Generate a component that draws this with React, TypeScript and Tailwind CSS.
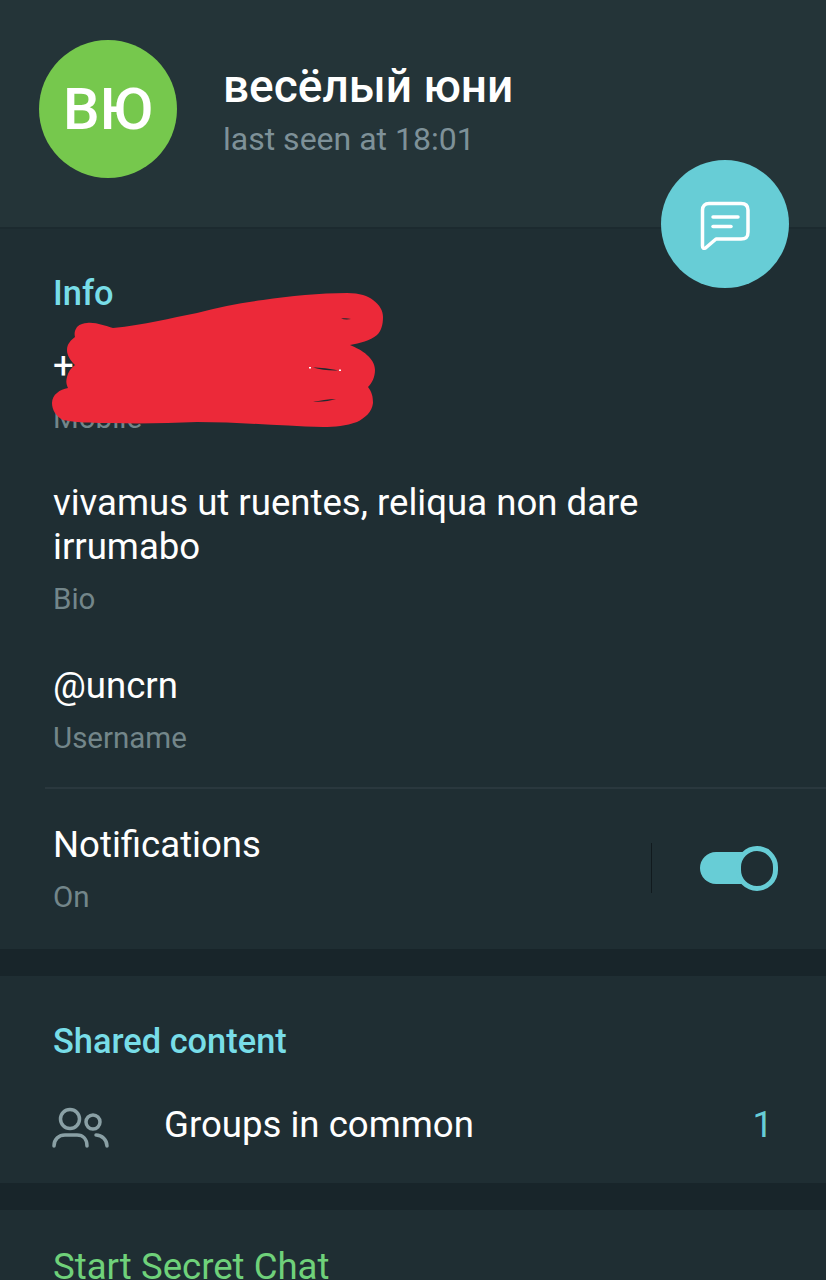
function Field({ value, label }: { value: string; label: string }) {
  return (
    <div>
      <div className="text-[36.6px] leading-[44px] text-white">{value}</div>
      <div className="mt-[12px] text-[29.5px] leading-[36px] text-[#73868a]">{label}</div>
    </div>
  );
}

function Scribble() {
  return (
    <svg className="absolute left-0 top-0" width="826" height="460" viewBox="0 0 826 460">
      <path
        fill="#ec2939"
        d="M87 323 C96 322 105 326 113 328 C145 325 170 318 197 313 C220 307 240 303 263 300 C290 296 320 293 347 293 C360 293 368 296 373 300 C380 305 383 311 383 317 C383 325 381 331 377 335 C370 341 360 343 350 345 C362 350 375 358 375 370 C375 377 372 383 368 387 C372 392 373 397 373 403 C372 412 365 418 357 422 C346 426 335 427 323 427 C280 426 240 422 197 422 C170 423 140 424 113 423 C95 423 78 423 63 420 C56 416 52 410 52 403 C52 399 54 395 57 393 C60 390 64 389 68 388 C66 384 66 381 67 377 C68 372 71 368 75 365 C70 360 67 355 67 350 C67 344 71 340 75 337 C74 333 75 330 77 327 C80 324 84 323 87 323 Z"
      />
      <path fill="#1f2b30" d="M341 318.5 C344 318 348 318 351 319 C348 319.6 344 319.6 341 318.5 Z" />
      <path fill="#1f2b30" d="M313 367.5 C320 367.5 330 368.5 338 370.5 C330 371 320 369.5 313 367.5 Z" />
      <path fill="#1f2b30" d="M313 401.5 C320 401 328 399 336 399 C330 401 320 402.5 313 401.5 Z" />
      <rect x="309" y="367" width="2" height="1.5" fill="#ffffff" />
      <rect x="339" y="369.5" width="2" height="1.5" fill="#ffffff" />
    </svg>
  );
}

export default function App() {
  return (
    <div className="relative h-[1280px] w-[826px] overflow-hidden bg-[#1f2e33] font-['Roboto',sans-serif]">
      <header className="flex h-[229px] items-start gap-[46px] border-b-2 border-[#1c2a2f] bg-[#243438] pl-[39px] pt-[40px]">
        <div className="flex h-[138px] w-[138px] items-center justify-center rounded-full bg-[#76c84d] text-[58px] font-medium text-white">
          ВЮ
        </div>
        <div className="pt-[21px]">
          <div className="text-[46px] font-medium leading-[50px] text-white">весёлый юни</div>
          <div className="mt-[8px] text-[32px] leading-[40px] text-[#7e9198]">last seen at 18:01</div>
        </div>
      </header>

      <section className="h-[720px] pl-[53px]">
        <div className="pt-[44px] text-[34.4px] font-medium leading-[40px] text-[#78dde8]">Info</div>

        <div className="mt-[31px] h-[44px] text-[36.6px] leading-[44px] text-white">+</div>
        <div className="mt-[12px] h-[36px] text-[29.5px] leading-[36px] text-[#73868a]">Mobile</div>

        <div className="mt-[45px] pr-[150px]">
          <Field value="vivamus ut ruentes, reliqua non dare irrumabo" label="Bio" />
        </div>

        <div className="mt-[47px]">
          <Field value="@uncrn" label="Username" />
        </div>

        <div className="mt-[31px] ml-[-8px] border-t-2 border-[#2a383e]" />

        <div className="flex items-center pr-[48px] pt-[34px]">
          <div className="flex-1">
            <Field value="Notifications" label="On" />
          </div>
          <div className="mr-[48px] mt-[-2px] h-[50px] w-px bg-[#111a1e]" />
          <div className="mt-[-2px] flex w-[78px] items-center">
            <div className="h-[32px] w-[50px] rounded-l-full bg-[#67cdd6]" />
            <div className="ml-[-13px] h-[45px] w-[42px] shrink-0 rounded-full border-[5px] border-[#67cdd6] bg-[#1f2e33]" />
          </div>
        </div>
      </section>

      <div className="h-[27px] bg-[#18252a]" />

      <section className="h-[207px] px-[53px]">
        <div className="pt-[45px] text-[34.4px] font-medium leading-[40px] text-[#78dde8]">Shared content</div>
        <div className="mt-[42px] flex h-[44px] items-center">
          <svg className="ml-[-3px] shrink-0" width="60" height="46" viewBox="0 0 60 46" fill="none" stroke="#8aa0a5" strokeWidth="3.5" strokeLinecap="round">
            <circle cx="20" cy="17" r="9.5" />
            <circle cx="43" cy="20" r="7" />
            <path d="M4 44 C4 37 9 33 15 33 H27 C33 33 37 37 37 44" />
            <path d="M46 33 C52 33 57 38 57 44" />
          </svg>
          <div className="ml-[54px] flex-1 text-[36.6px] leading-[44px] text-white">Groups in common</div>
          <div className="text-[36.6px] leading-[44px] text-[#67cdd6]">1</div>
        </div>
      </section>

      <div className="h-[27px] bg-[#18252a]" />

      <div className="pl-[53px] pt-[35px] text-[36.6px] leading-[44px] text-[#6fd17a]">Start Secret Chat</div>

      <Scribble />

      <button className="absolute left-[661px] top-[160px] flex h-[128px] w-[128px] items-center justify-center rounded-full bg-[#67cdd6]">
        <svg width="52" height="52" viewBox="0 0 52 52" fill="none" stroke="#ffffff" strokeWidth="3.5" strokeLinecap="round" strokeLinejoin="round">
          <path d="M10 5.5 H42 C47 5.5 49 8 49 12 V34 C49 39 47 41 42 41 H17 L6.5 50 C4.5 51 3.5 50 3.5 48 V12 C3.5 8 6 5.5 10 5.5 Z" />
          <path d="M14 19 H39" />
          <path d="M14 28.5 H32" />
        </svg>
      </button>
    </div>
  );
}
